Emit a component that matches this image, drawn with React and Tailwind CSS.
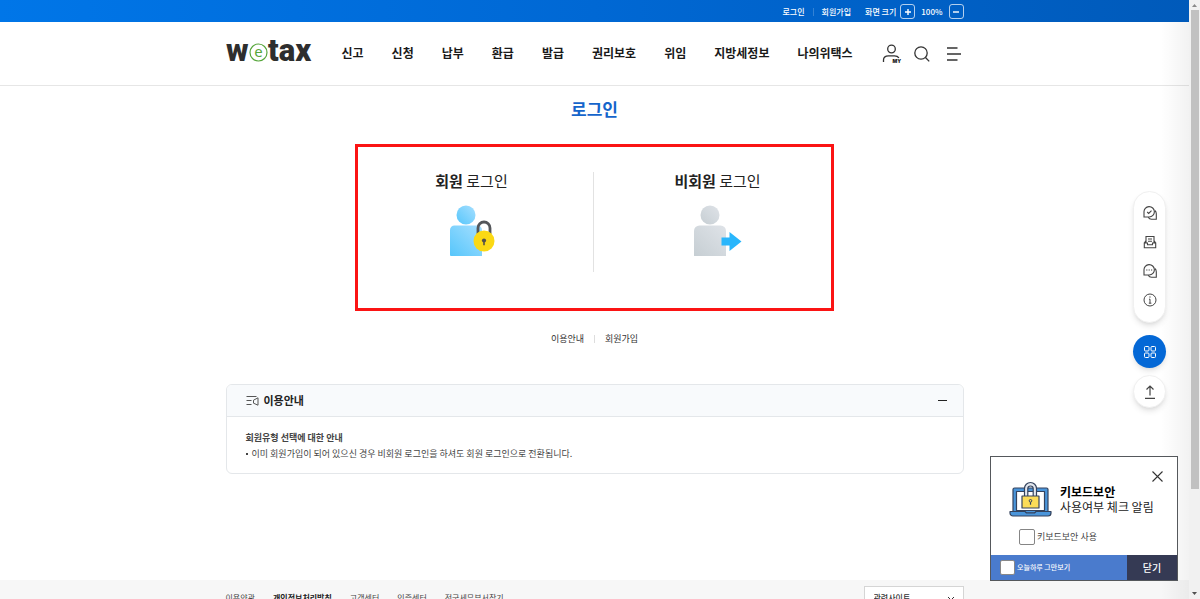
import React from "react";

const menus = ["신고", "신청", "납부", "환급", "발급", "권리보호", "위임", "지방세정보", "나의위택스"];

function Logo() {
  return (
    <a href="#" aria-label="wetax" className="flex h-10 w-[88px] shrink-0 items-center">
      <svg viewBox="0 0 88 40" width="88" height="40" className="overflow-visible">
        <g fontFamily="Roboto, sans-serif" fill="#2e2e2e">
          <text x="0" y="28" fontSize="31" fontWeight="900">w</text>
          <text x="42" y="28" fontSize="31" fontWeight="900">tax</text>
          <text x="32.500" y="24" fontSize="15" textAnchor="middle" fill="#56a63b" fontFamily="Noto Sans, sans-serif">e</text>
        </g>
        <circle cx="32.500" cy="19.500" r="8.500" fill="#fff" fillOpacity="0" stroke="#56a63b" strokeWidth="1.200" />
      </svg>
    </a>
  );
}

function TopBar() {
  return (
    <div className="h-[22px] shrink-0 bg-linear-to-r from-[#0076e8] via-[#0068d4] to-[#005aba] text-[8px] font-medium text-white">
      <div className="mx-auto flex h-full w-[738px] items-center justify-end pt-px">
        <a href="#">로그인</a>
        <span className="mx-2 h-2 w-px bg-white/20" />
        <a href="#">회원가입</a>
        <span className="ml-3.5">화면 크기</span>
        <button aria-label="확대" className="ml-1 flex size-[15px] items-center justify-center rounded-[3px] border border-white/70">
          <svg viewBox="0 0 8 8" width="8" height="8" stroke="#fff" strokeWidth="1.400"><path d="M4 1v6M1 4h6" /></svg>
        </button>
        <span className="mx-1.5">100%</span>
        <button aria-label="축소" className="flex size-[15px] items-center justify-center rounded-[3px] border border-white/70">
          <svg viewBox="0 0 8 8" width="8" height="8" stroke="#fff" strokeWidth="1.400"><path d="M1 4h6" /></svg>
        </button>
      </div>
    </div>
  );
}

function Header() {
  return (
    <header className="h-16 shrink-0 border-b border-[#e6e6e6]">
      <div className="mx-auto flex h-full w-[738px] items-center pr-0.5 pb-0.5">
        <Logo />
        <nav className="ml-7 flex gap-7 text-[12px] font-bold text-[#1a1a1a]">
          {menus.map((m) => (
            <a key={m} href="#" className="whitespace-nowrap">{m}</a>
          ))}
        </nav>
        <div className="ml-auto flex items-center gap-3 pt-0.5 text-[#333]">
          <button aria-label="마이페이지">
            <svg viewBox="0 0 20 20" width="20" height="20" fill="none" stroke="currentColor" strokeWidth="1.300">
              <circle cx="9.500" cy="5" r="3.800" />
              <path d="M1.500 18v-2c0-2.600 2.200-4.200 5-4.200h6c2 0 3.600.8 4.400 2" />
              <text x="10.500" y="18.500" fontSize="5" fontWeight="900" fill="#222" stroke="none" fontFamily="Inter, sans-serif">MY</text>
            </svg>
          </button>
          <button aria-label="검색">
            <svg viewBox="0 0 16 16" width="16" height="16" fill="none" stroke="currentColor" strokeWidth="1.300">
              <circle cx="7" cy="7" r="6.200" />
              <path d="M11.500 11.500l3.700 3.900" />
            </svg>
          </button>
          <button aria-label="전체메뉴" className="ml-1">
            <svg viewBox="0 0 16 16" width="16" height="16" fill="none" stroke="currentColor" strokeWidth="1.300">
              <path d="M1 2h10.500M1 8h14M1 14h10.500" />
            </svg>
          </button>
        </div>
      </div>
    </header>
  );
}

function MemberIcon() {
  return (
    <svg viewBox="0 0 46 52" width="46" height="52" className="shrink-0">
      <defs>
        <linearGradient id="member" x1="1" y1="0" x2="0" y2="1">
          <stop offset="0" stopColor="#a6dfff" />
          <stop offset="1" stopColor="#56c6fb" />
        </linearGradient>
      </defs>
      <circle cx="17" cy="10" r="9.500" fill="url(#member)" />
      <path d="M1 25a4.500 4.500 0 0 1 4.500-4.500h23A4.500 4.500 0 0 1 33 25v26H2a1 1 0 0 1-1-1z" fill="url(#member)" />
      <path d="M29 29v-6a6 6 0 0 1 12 0v6" fill="none" stroke="#54565a" strokeWidth="2.800" />
      <circle cx="35" cy="36" r="10.500" fill="#fbd914" />
      <circle cx="35" cy="35.500" r="2.100" fill="#54514a" />
      <path d="M34.200 36h1.600v4.200h-1.600z" fill="#54514a" />
    </svg>
  );
}

function GuestIcon() {
  return (
    <svg viewBox="0 0 50 52" width="50" height="52" className="shrink-0">
      <defs>
        <linearGradient id="guest" x1="1" y1="0" x2="0" y2="1">
          <stop offset="0" stopColor="#dfe3e8" />
          <stop offset="1" stopColor="#c6ced3" />
        </linearGradient>
      </defs>
      <circle cx="17" cy="10" r="9.500" fill="url(#guest)" />
      <path d="M1 26a5.500 5.500 0 0 1 5.500-5.500h21A5.500 5.500 0 0 1 33 26v25H1z" fill="url(#guest)" />
      <path d="M28.500 32.500h8V27L48.500 36.500 36.500 46v-5.500h-8z" fill="#29b6fc" />
    </svg>
  );
}

function Guide() {
  return (
    <section className="mx-auto mt-[37px] w-[738px] overflow-hidden rounded-md border border-[#e4e7ea]">
      <div className="flex h-8 items-center border-b border-[#e4e7ea] bg-[#f8fafc] pr-3 pl-[19px]">
        <svg viewBox="0 0 13 12" width="13" height="12" fill="none" stroke="#555" strokeWidth="1">
          <path d="M0.500 1.500h10M0.500 5.500h5M0.500 9.500h5M12 2.800v7.400L7.500 8.200V5.200z" />
        </svg>
        <h2 className="ml-[5px] text-[11px] font-bold text-[#222]">이용안내</h2>
        <button aria-label="접기" className="ml-auto flex h-4 w-4 items-center justify-center">
          <span className="h-px w-[9px] bg-[#222]" />
        </button>
      </div>
      <div className="px-[19px] pt-[13px] pb-[11px] text-[9px] leading-4 text-[#444]">
        <h3 className="font-bold">회원유형 선택에 대한 안내</h3>
        <ul>
          <li className="flex items-center gap-1">
            <span className="size-[2px] bg-[#444]" />
            이미 회원가입이 되어 있으신 경우 비회원 로그인을 하셔도 회원 로그인으로 전환됩니다.
          </li>
        </ul>
      </div>
    </section>
  );
}

function Footer() {
  return (
    <footer className="shrink-0 bg-[#f7f7f7] pt-1.5">
      <div className="mx-auto flex w-[738px] items-center text-[8px] text-[#444]">
        <div className="flex gap-[18px]">
          <a href="#">이용약관</a>
          <a href="#" className="font-bold text-[#222]">개인정보처리방침</a>
          <a href="#">고객센터</a>
          <a href="#">인증센터</a>
          <a href="#">전국세무부서찾기</a>
        </div>
        <div className="relative ml-auto">
          <select aria-label="관련사이트" className="h-6 w-[100px] appearance-none border border-[#d5d5d5] bg-white pl-[9px] font-medium text-[#333]">
            <option>관련사이트</option>
          </select>
          <svg viewBox="0 0 8 6" width="8" height="6" fill="none" stroke="#333" className="pointer-events-none absolute top-[10px] right-[9px]">
            <path d="M1 1l3 3 3-3" />
          </svg>
        </div>
      </div>
    </footer>
  );
}

function BubblePair({ children }) {
  return (
    <svg viewBox="0 0 14 14" width="14" height="14" fill="none" stroke="#444" strokeWidth="1.100">
      <path d="M1 11V6.200A5.200 5.200 0 1 1 6.200 11z" />
      <path d="M11.800 4.500c1 .8 1.500 2 1.500 3.200v5.500H8.500c-1.400 0-2.600-.7-3.300-1.900" />
      {children}
    </svg>
  );
}

function QuickMenu() {
  return (
    <aside className="absolute top-[191px] right-[23px] flex w-[33px] flex-col items-center">
      <div className="flex w-full flex-col items-center gap-[15px] rounded-full border border-[#f0f0f0] bg-white pt-3.5 pb-[15px] shadow-md">
        <button aria-label="확인">
          <BubblePair><path d="M4.200 6l1.500 1.500 2.800-2.900" /></BubblePair>
        </button>
        <button aria-label="신고함">
          <svg viewBox="0 0 14 14" width="14" height="14" fill="none" stroke="#444" strokeWidth="1.100">
            <path d="M3 7.500V1.500h8v6M5 4h4M5 6.300h4M1.300 8v4.800h11.400V8H9.500v1.800h-5V8zM1.300 8L3 5.500M12.700 8L11 5.500" />
          </svg>
        </button>
        <button aria-label="상담">
          <BubblePair><path d="M3.200 6h1.200M5.600 6h1.200M8 6h1.200" /></BubblePair>
        </button>
        <button aria-label="안내">
          <svg viewBox="0 0 14 14" width="14" height="14" fill="none" stroke="#444" strokeWidth="1">
            <circle cx="7" cy="7" r="6" />
            <path d="M6 6.200h1v4M5.800 10.200h2.600M6.300 4h1.300" />
          </svg>
        </button>
      </div>
      <button aria-label="바로가기" className="mt-3 flex size-[33px] items-center justify-center rounded-full bg-[#0468d6] shadow-md">
        <svg viewBox="0 0 14 14" width="14" height="14" fill="none" stroke="#fff" strokeWidth="1">
          <rect x="1.500" y="1.500" width="4.500" height="4.500" rx="1" />
          <rect x="8" y="1.500" width="4.500" height="4.500" rx="1" />
          <rect x="1.500" y="8" width="4.500" height="4.500" rx="1" />
          <rect x="8" y="8" width="4.500" height="4.500" rx="1" />
        </svg>
      </button>
      <button aria-label="맨 위로" className="mt-[7px] flex size-[33px] items-center justify-center rounded-full border border-[#f0f0f0] bg-white shadow-md">
        <svg viewBox="0 0 14 14" width="14" height="14" fill="none" stroke="#444" strokeWidth="1.200">
          <path d="M7 10.500V1.200M3.500 4.500L7 1l3.500 3.500M2 13.300h10" />
        </svg>
      </button>
    </aside>
  );
}

function KeyboardPopup() {
  return (
    <div role="dialog" aria-label="키보드보안" className="absolute right-[11px] bottom-[18px] w-[188px] border border-[#55585c] bg-white">
      <button aria-label="닫기" className="absolute top-3.5 right-3.5">
        <svg viewBox="0 0 11 11" width="11" height="11" stroke="#333" strokeWidth="1.100"><path d="M.5.5l10 10M10.500.5l-10 10" /></svg>
      </button>
      <div className="flex items-center gap-2 pt-6 pl-[18px]">
        <svg viewBox="0 0 43 36" width="43" height="36" stroke="#34435e" strokeWidth="1.200" strokeLinejoin="round">
          <rect x="4" y="7" width="35" height="25" rx="1.500" fill="#4a95da" />
          <rect x="7.500" y="10.500" width="28" height="19" fill="#fff" />
          <path d="M1 30.500h15l1.500 1.500h8l1.500-1.500h15v1.500a3 3 0 0 1-3 3H4a3 3 0 0 1-3-3z" fill="#4a95da" />
          <path d="M15.500 15.500V7.500a6 6 0 0 1 12 0v8h-3.300V7.700a2.700 2.700 0 0 0-5.400 0v7.800z" fill="#e3e8ef" />
          <rect x="13" y="15" width="17" height="12" fill="#fbdc58" />
          <circle cx="21.500" cy="19.800" r="1.300" fill="none" strokeWidth="1" />
          <path d="M21.500 21.200v2.500" />
        </svg>
        <div className="text-[12px] leading-[15px] whitespace-nowrap">
          <p className="font-bold text-black">키보드보안</p>
          <p className="text-[#222]">사용여부 체크 알림</p>
        </div>
      </div>
      <label className="mt-3 ml-7 flex w-fit items-center gap-0.5 text-[9px] leading-4 text-[#444]">
        <input type="checkbox" className="size-4 appearance-none rounded-[2px] border border-[#858585] bg-white" />
        키보드보안 사용
      </label>
      <div className="mt-2.5 flex h-[25px] bg-[#4a7bcd] text-white">
        <label className="flex flex-1 items-center gap-0.5 pl-[9px] text-[7px] font-medium">
          <input type="checkbox" className="size-[15px] appearance-none rounded-[2px] border border-[#888] bg-white" />
          오늘하루 그만보기
        </label>
        <button className="w-[50px] bg-[#353a54] text-[10px] font-medium">닫기</button>
      </div>
    </div>
  );
}

function ScrollBar() {
  return (
    <div aria-hidden="true" className="flex w-[11px] shrink-0 flex-col items-center bg-[#f1f1f1]">
      <svg viewBox="0 0 11 10" width="11" height="10" className="shrink-0"><path d="M3 7l2.500-3L8 7z" fill="#8a8a8a" /></svg>
      <div className="h-4/5 w-2 bg-[#c1c1c1]" />
      <svg viewBox="0 0 11 10" width="11" height="10" className="mt-auto shrink-0"><path d="M3 3l2.500 3L8 3z" fill="#505050" /></svg>
    </div>
  );
}

export default function App() {
  return (
    <div className="flex h-screen overflow-hidden bg-white font-['Noto_Sans_CJK_KR',sans-serif]">
      <div className="relative flex min-w-0 flex-1 flex-col overflow-hidden">
        <TopBar />
        <Header />
        <main className="shrink-0 pt-[11px] pb-[106px]">
          <h1 className="text-center text-[17px] leading-6 font-bold text-[#1565cb]">로그인</h1>
          <div className="mx-auto mt-[23px] flex w-[479px] border-3 border-[#fb1414] pt-[25px] pb-9 text-[15px] leading-[18px] text-[#222]">
            <a href="#" className="flex h-[100px] flex-1 flex-col items-center gap-[15px] border-r border-[#e2e2e2] pr-2">
              <span><strong className="font-bold">회원</strong> 로그인</span>
              <MemberIcon />
            </a>
            <a href="#" className="flex h-[100px] flex-1 flex-col items-center gap-[15px] pl-2.5">
              <span><strong className="font-bold">비회원</strong> 로그인</span>
              <GuestIcon />
            </a>
          </div>
          <div className="mt-5 flex items-center justify-center gap-2.5 text-[9px] leading-4 text-[#333]">
            <a href="#">이용안내</a>
            <span className="h-2 w-px bg-[#ddd]" />
            <a href="#">회원가입</a>
          </div>
          <Guide />
        </main>
        <Footer />
        <div className="pointer-events-none absolute top-[22px] right-0 bottom-0 w-7 bg-linear-to-r from-transparent to-black/5" />
        <QuickMenu />
        <KeyboardPopup />
      </div>
      <ScrollBar />
    </div>
  );
}
